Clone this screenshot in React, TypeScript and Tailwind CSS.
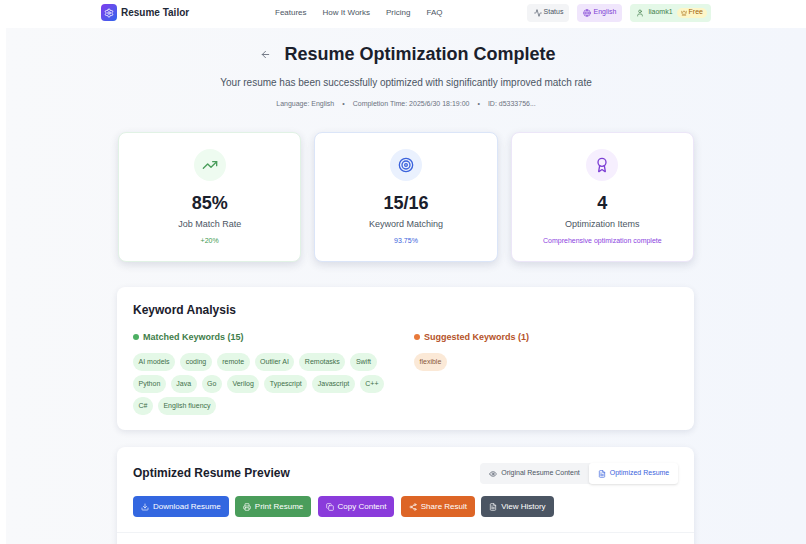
import { ArrowLeft, Activity, Globe, User, Crown, TrendingUp, Target, Award, Eye, FileText, Download, Printer, Copy, Share2, Settings } from "lucide-react";
import type { ReactNode } from "react";

const matched = [
  ["AI models", "coding", "remote", "Outlier AI", "Remotasks", "Swift"],
  ["Python", "Java", "Go", "Verilog", "Typescript", "Javascript", "C++"],
  ["C#", "English fluency"],
];

function StatCard({ icon, circle, value, label, note, noteColor, border }: {
  icon: ReactNode; circle: string; value: string; label: string; note: string; noteColor: string; border: string;
}) {
  return (
    <div className={`h-[130px] rounded-[8px] bg-white border flex flex-col items-center pt-[16px] shadow-[0_3px_8px_rgba(30,41,80,0.13)] ${border}`}>
      <div className={`w-[32px] h-[32px] rounded-full flex items-center justify-center ${circle}`}>{icon}</div>
      <div className="mt-[10px] text-[18px] leading-[24px] font-bold text-[#1a202c]">{value}</div>
      <div className="mt-[2px] text-[9px] leading-[14px] text-[#4b5563]">{label}</div>
      <div className={`mt-[4px] text-[7px] leading-[12px] ${noteColor}`}>{note}</div>
    </div>
  );
}

function Chip({ text, cls }: { text: string; cls: string }) {
  return <span className={`h-[18px] px-[5.5px] rounded-full flex items-center text-[7px] ${cls}`}>{text}</span>;
}

function ActionButton({ icon, text, cls }: { icon: ReactNode; text: string; cls: string }) {
  return (
    <button className={`h-[21px] px-[8px] rounded-[4px] flex items-center gap-[4px] text-[8px] text-white ${cls}`}>
      {icon}
      {text}
    </button>
  );
}

export default function App() {
  return (
    <div className="w-[806px] h-[544px] overflow-hidden bg-white font-['Liberation_Sans',Arial,sans-serif]">
      {/* Header */}
      <header className="h-[28px] pl-[101px] pb-[3px] flex items-center bg-white">
        <div className="w-[16px] h-[17px] rounded-[4px] bg-gradient-to-br from-[#7c3aed] to-[#2563eb] flex items-center justify-center">
          <Settings size={10} className="text-white" />
        </div>
        <span className="ml-[4px] w-[154px] text-[10px] font-bold text-[#1f2937]">Resume Tailor</span>
        <nav className="flex gap-[16px] text-[8px] text-[#4b5563]">
          <span>Features</span>
          <span>How It Works</span>
          <span>Pricing</span>
          <span>FAQ</span>
        </nav>
        <div className="ml-[85px] flex items-center gap-[8px] text-[7px]">
          <div className="h-[18px] w-[42px] rounded-[4px] bg-[#f3f4f6] flex items-center justify-center gap-[2px] text-[#4b5563]">
            <Activity size={8} />Status
          </div>
          <div className="h-[18px] w-[45px] rounded-[4px] bg-[#f0e6fc] flex items-center justify-center gap-[2px] text-[#7e3fd4]">
            <Globe size={8} />English
          </div>
          <div className="h-[18px] w-[81px] rounded-[4px] bg-[#e4f8e7] flex items-center pl-[6px] gap-[4px] text-[#3f7d4a]">
            <User size={8} />
            <span>liaomk1</span>
            <span className="h-[10px] px-[4px] rounded-full bg-[#fdf6c8] flex items-center gap-[2px] text-[#a16207]">
              <Crown size={6} />Free
            </span>
          </div>
        </div>
      </header>

      {/* Main */}
      <main className="ml-[6px] h-[516px] bg-gradient-to-r from-[#f8f9fb] to-[#f3f6fc] pt-[15px]">
        <div className="pl-[4px] flex items-center justify-center gap-[13px]">
          <ArrowLeft size={11} className="text-[#6b7280]" />
          <h1 className="text-[18px] leading-[22px] font-bold text-[#1a202c]">Resume Optimization Complete</h1>
        </div>
        <p className="mt-[11px] text-center text-[10px] leading-[14px] text-[#4b5563]">
          Your resume has been successfully optimized with significantly improved match rate
        </p>
        <div className="mt-[8px] flex justify-center gap-[8px] text-[7px] leading-[12px] text-[#6b7280]">
          <span>Language: English</span>
          <span>•</span>
          <span>Completion Time: 2025/6/30 18:19:00</span>
          <span>•</span>
          <span>ID: d5333756...</span>
        </div>

        <div className="ml-[112px] w-[576px] mt-[22px] grid grid-cols-3 gap-[13px]">
          <StatCard
            icon={<TrendingUp size={16} className="text-[#4a9d5b]" />}
            circle="bg-[#eefbf0]" value="85%" label="Job Match Rate" note="+20%"
            noteColor="text-[#3f9a52]" border="border-[#e1f2e5]"
          />
          <StatCard
            icon={<Target size={16} className="text-[#3b63dc]" />}
            circle="bg-[#eaf1fe]" value="15/16" label="Keyword Matching" note="93.75%"
            noteColor="text-[#3b63dc]" border="border-[#dbe5f8]"
          />
          <StatCard
            icon={<Award size={16} className="text-[#7c3fd4]" />}
            circle="bg-[#f6effe]" value="4" label="Optimization Items" note="Comprehensive optimization complete"
            noteColor="text-[#8b3fe0]" border="border-[#ece6f8]"
          />
        </div>

        {/* Keyword Analysis */}
        <section className="ml-[111px] w-[577px] h-[143px] mt-[25px] rounded-[8px] bg-white px-[16px] pt-[15px] shadow-[0_2px_6px_rgba(30,41,80,0.1)]">
          <h2 className="text-[12px] leading-[16px] font-bold text-[#1a202c]">Keyword Analysis</h2>
          <div className="mt-[13px] flex">
            <div className="w-[281px]">
              <div className="flex items-center gap-[4px] text-[9px] leading-[12px] font-bold text-[#3f7d4a]">
                <span className="w-[6px] h-[6px] rounded-full bg-[#4caf62]" />
                Matched Keywords (15)
              </div>
              <div className="mt-[10px] flex flex-col gap-[4px]">
                {matched.map((row) => (
                  <div key={row[0]} className="flex gap-[5px]">
                    {row.map((k) => <Chip key={k} text={k} cls="bg-[#e4f8e7] text-[#3f6f4a]" />)}
                  </div>
                ))}
              </div>
            </div>
            <div>
              <div className="flex items-center gap-[4px] text-[9px] leading-[12px] font-bold text-[#b5532a]">
                <span className="w-[6px] h-[6px] rounded-full bg-[#e8793a]" />
                Suggested Keywords (1)
              </div>
              <div className="mt-[10px] flex">
                <Chip text="flexible" cls="bg-[#fbe9d7] text-[#8a5a3c]" />
              </div>
            </div>
          </div>
        </section>

        {/* Preview */}
        <section className="ml-[111px] w-[577px] h-[120px] mt-[17px] rounded-[8px] bg-white shadow-[0_2px_6px_rgba(30,41,80,0.1)]">
          <div className="px-[16px] pt-[16px] pb-[15px] border-b border-[#f1f3f6]">
            <div className="flex items-center justify-between">
              <h2 className="text-[12px] leading-[21px] font-bold text-[#1a202c]">Optimized Resume Preview</h2>
              <div className="h-[21px] rounded-[4px] bg-[#f3f4f6] flex text-[7px]">
                <div className="w-[109px] flex items-center justify-center gap-[4px] text-[#4b5563]">
                  <Eye size={8} />Original Resume Content
                </div>
                <div className="w-[89px] rounded-[3px] bg-white shadow-sm flex items-center justify-center gap-[4px] text-[#3b63dc]">
                  <FileText size={8} />Optimized Resume
                </div>
              </div>
            </div>
            <div className="mt-[12px] flex gap-[6.25px]">
              <ActionButton icon={<Download size={8} />} text="Download Resume" cls="bg-[#3367e0]" />
              <ActionButton icon={<Printer size={8} />} text="Print Resume" cls="bg-[#4a9d5b]" />
              <ActionButton icon={<Copy size={8} />} text="Copy Content" cls="bg-[#8a3bdb]" />
              <ActionButton icon={<Share2 size={8} />} text="Share Result" cls="bg-[#dd6526]" />
              <ActionButton icon={<FileText size={8} />} text="View History" cls="bg-[#4b5563]" />
            </div>
          </div>
        </section>
      </main>
    </div>
  );
}
